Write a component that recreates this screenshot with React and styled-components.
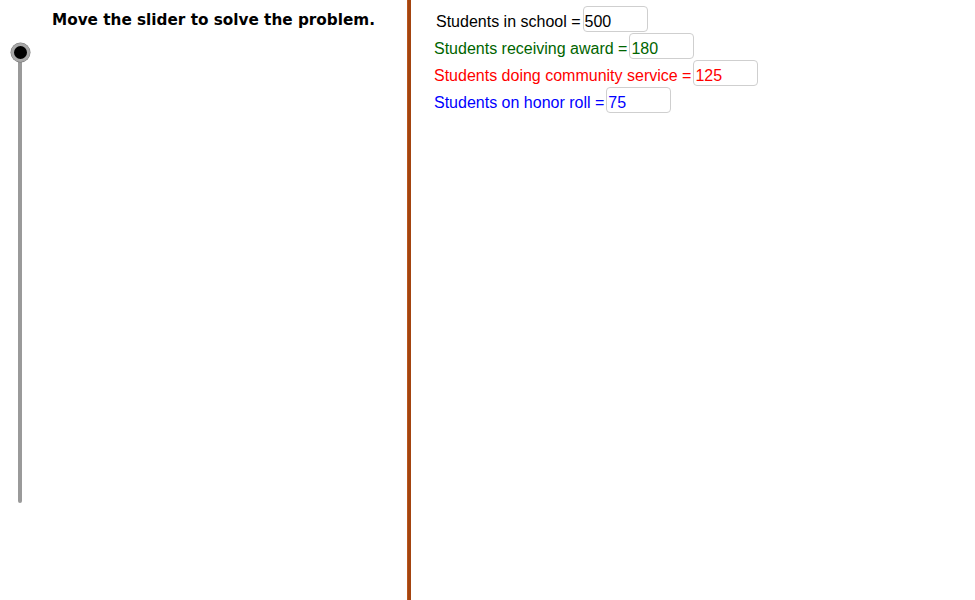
import React from "react";
import styled, { createGlobalStyle } from "styled-components";

const GlobalStyle = createGlobalStyle`
  html, body {
    margin: 0;
    padding: 0;
    background: #ffffff;
  }
  body {
    font-family: "Liberation Sans", Arial, sans-serif;
  }
`;

const rows = [
  { label: "Students in school", value: "500", color: "#000000", indent: 2 },
  { label: "Students receiving award", value: "180", color: "#006400", indent: 0 },
  { label: "Students doing community service", value: "125", color: "#ff0000", indent: 0 },
  { label: "Students on honor roll", value: "75", color: "#0000ff", indent: 0 },
];

const App = () => {
  return (
    <>
      <GlobalStyle />
      <Page>
        <LeftPanel>
          <Title>Move the slider to solve the problem.</Title>
          <Slider>
            <Track />
            <Knob />
          </Slider>
        </LeftPanel>
        <Divider />
        <RightPanel>
          {rows.map((r) => (
            <Row key={r.label} $color={r.color} $indent={r.indent}>
              <Label>{r.label} =</Label>
              <ValueBox>{r.value}</ValueBox>
            </Row>
          ))}
        </RightPanel>
      </Page>
    </>
  );
};

export default App;

const Page = styled.div`
  width: 975px;
  height: 600px;
  display: flex;
  overflow: hidden;
`;

const LeftPanel = styled.div`
  width: 407px;
  display: flex;
  flex-direction: column;
`;

const Title = styled.div`
  margin: 10px 0 0 52px;
  font-family: "DejaVu Sans", sans-serif;
  font-size: 15.25px;
  font-weight: 700;
  color: #000;
  line-height: 20px;
`;

const Slider = styled.div`
  position: relative;
  margin: 22px 0 0 18px;
  width: 4px;
  height: 451px;
`;

const Track = styled.div`
  width: 4px;
  height: 100%;
  background: #9a9a9a;
  border-radius: 2px;
`;

const Knob = styled.div`
  position: absolute;
  left: -7.5px;
  top: -9.5px;
  width: 13px;
  height: 13px;
  border-radius: 50%;
  background: #000;
  border: 3px solid #a8a8a8;
  box-shadow: 0 0 0 0.5px #7a7a7a;
`;

const Divider = styled.div`
  width: 4px;
  height: 100%;
  background: #a3440f;
  border-left: 1px solid #b9551c;
  box-sizing: border-box;
`;

const RightPanel = styled.div`
  display: flex;
  flex-direction: column;
  gap: 1px;
  padding: 6px 0 0 23px;
`;

const Row = styled.div`
  display: flex;
  align-items: flex-start;
  color: ${(p) => p.$color};
  padding-left: ${(p) => p.$indent}px;
  height: 26px;
  font-size: 16px;
`;

const Label = styled.span`
  margin-right: 2px;
  padding-top: 6.5px;
  white-space: nowrap;
`;

const ValueBox = styled.div`
  width: 65px;
  height: 26px;
  box-sizing: border-box;
  border: 1px solid #cfcfcf;
  border-radius: 4px;
  padding: 5.5px 1px 0;
  line-height: normal;
  font-size: 16px;
`;
